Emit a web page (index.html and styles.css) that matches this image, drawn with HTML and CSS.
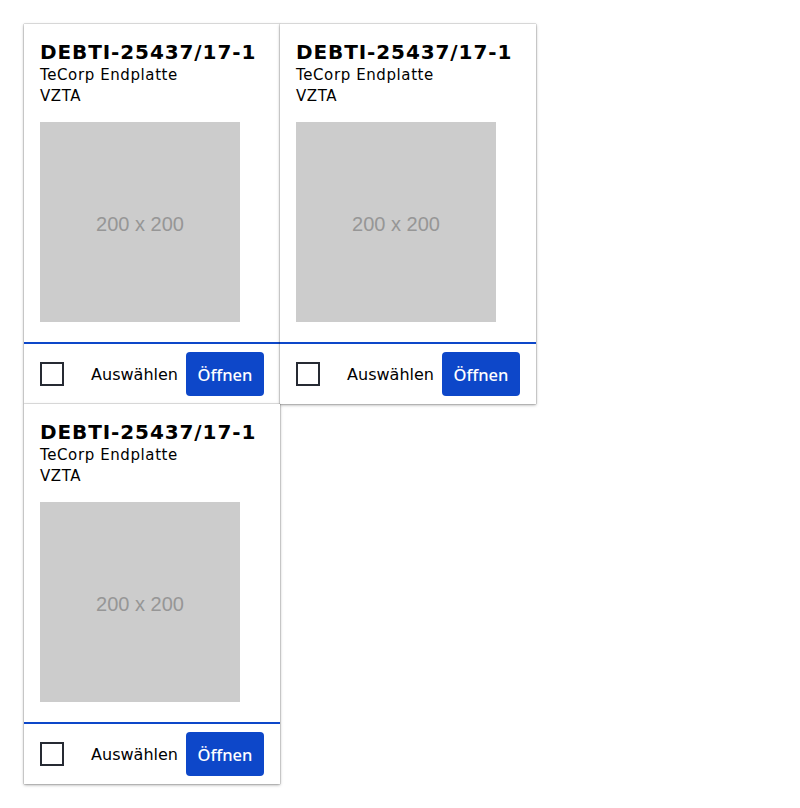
FILE: index.html
```html
<!DOCTYPE html>
<html lang="de">
<head>
<meta charset="utf-8">
<title>Artikel</title>
<link rel="stylesheet" href="styles.css">
</head>
<body>
<div class="grid">
  <div class="card">
    <div class="card-body">
      <h2 class="title">DEBTI-25437/17-1</h2>
      <div class="sub">TeCorp Endplatte</div>
      <div class="sub">VZTA</div>
      <div class="thumb">200 x 200</div>
    </div>
    <div class="card-footer">
      <span class="check"></span>
      <span class="label">Auswählen</span>
      <button class="btn">Öffnen</button>
    </div>
  </div>
  <div class="card">
    <div class="card-body">
      <h2 class="title">DEBTI-25437/17-1</h2>
      <div class="sub">TeCorp Endplatte</div>
      <div class="sub">VZTA</div>
      <div class="thumb">200 x 200</div>
    </div>
    <div class="card-footer">
      <span class="check"></span>
      <span class="label">Auswählen</span>
      <button class="btn">Öffnen</button>
    </div>
  </div>
  <div class="card">
    <div class="card-body">
      <h2 class="title">DEBTI-25437/17-1</h2>
      <div class="sub">TeCorp Endplatte</div>
      <div class="sub">VZTA</div>
      <div class="thumb">200 x 200</div>
    </div>
    <div class="card-footer">
      <span class="check"></span>
      <span class="label">Auswählen</span>
      <button class="btn">Öffnen</button>
    </div>
  </div>
</div>
</body>
</html>
```
FILE: styles.css
```css
body {
  margin: 8px;
  background: #fff;
  font-family: "DejaVu Sans", Verdana, sans-serif;
  color: #000;
}
.grid {
  padding: 16px;
  display: grid;
  grid-template-columns: repeat(2, 256px);
}
.card {
  background: #fff;
  box-shadow: 0 0 1px rgba(0,0,0,0.6), 0 1px 3px rgba(0,0,0,0.35);
  display: flex;
  flex-direction: column;
}
.card-body {
  padding: 16px 16px 20px;
  border-bottom: 2px solid #0d47c9;
}
.title {
  margin: 0;
  font-size: 20px;
  line-height: 25px;
  font-weight: bold;
  letter-spacing: 0.9px;
}
.sub {
  font-size: 15px;
  line-height: 21px;
  letter-spacing: 0.6px;
}
.thumb {
  margin-top: 15px;
  width: 200px;
  height: 200px;
  box-sizing: border-box;
  padding-top: 4px;
  background: #cccccc;
  color: #969696;
  font-family: "Liberation Sans", Arial, sans-serif;
  font-size: 20px;
  display: flex;
  align-items: center;
  justify-content: center;
}
.card-footer {
  display: flex;
  align-items: center;
  padding: 8px 16px;
}
.check {
  width: 20px;
  height: 20px;
  border: 2px solid #262a33;
}
.label {
  margin-left: auto;
  font-size: 16px;
}
.btn {
  margin-left: 8px;
  width: 78px;
  height: 44px;
  padding: 0;
  border: none;
  border-radius: 4px;
  background: #0d47c9;
  color: #fff;
  font-family: "Noto Sans", sans-serif;
  font-size: 16.5px;
  font-weight: 500;
}
```
